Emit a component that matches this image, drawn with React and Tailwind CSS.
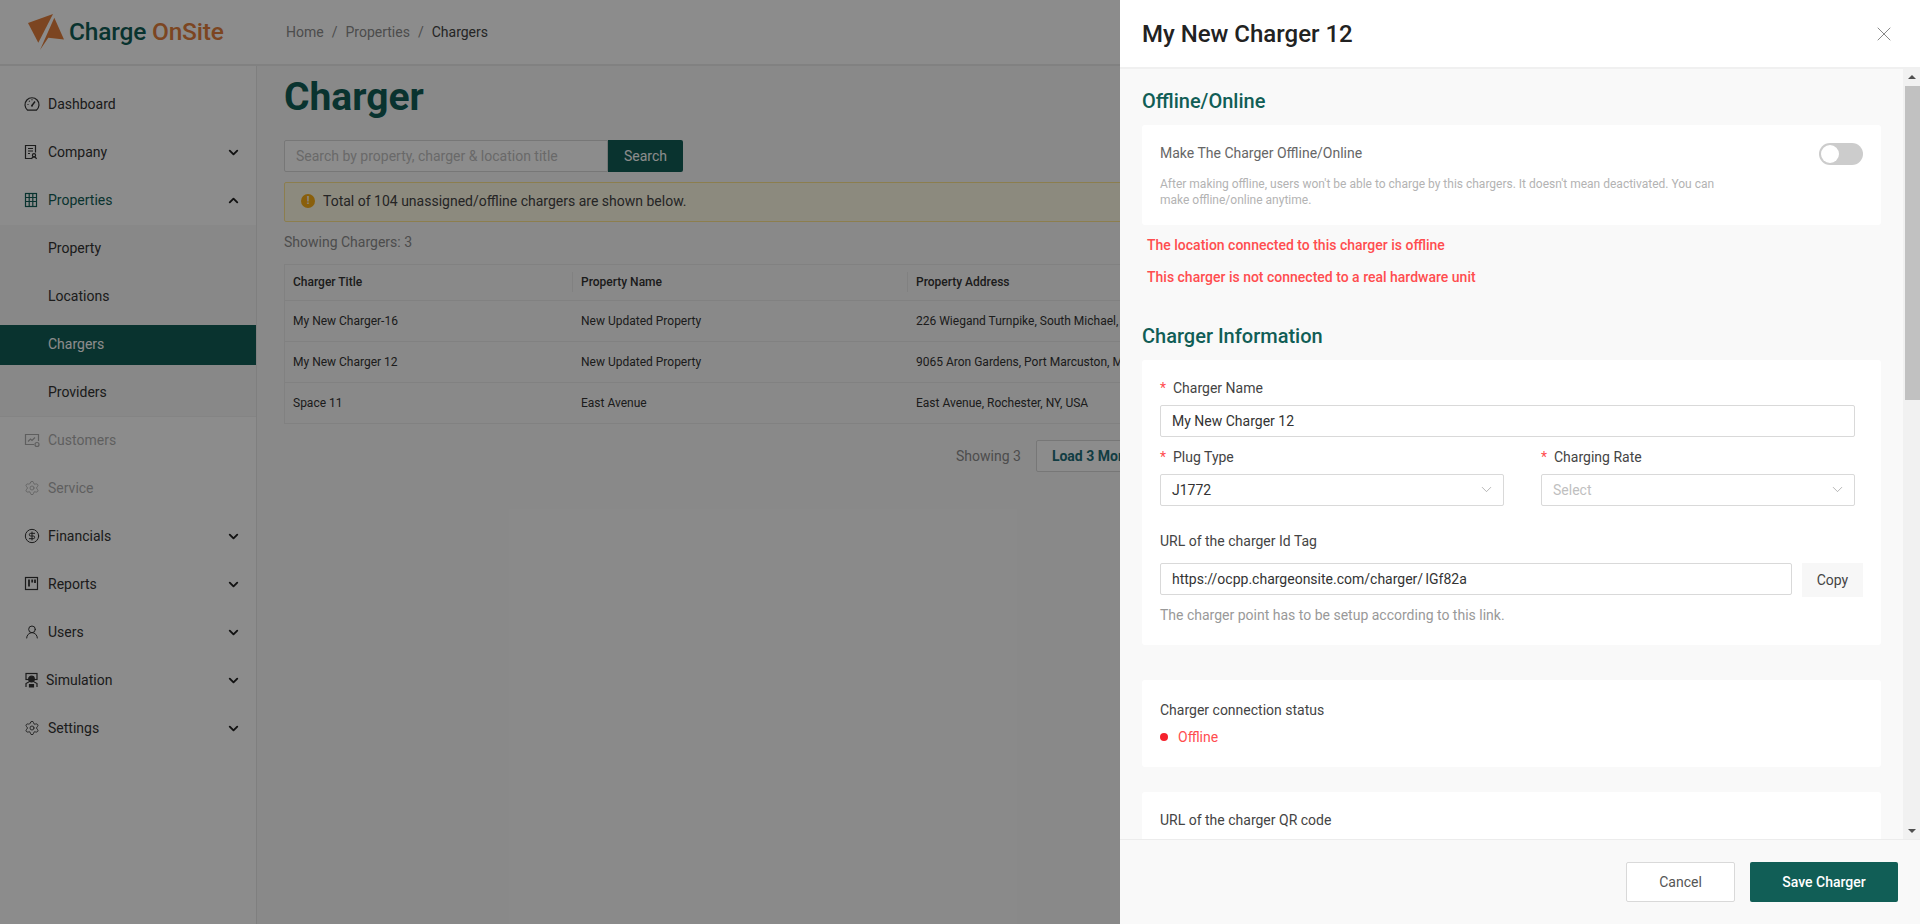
import React from "react";
import { ChevronDown, ChevronUp, X, Settings, UserRound, CircleDollarSign } from "lucide-react";

const GaugeIcon = () => (
  <svg width="16" height="16" viewBox="0 0 16 16" fill="none" stroke="#333" strokeWidth="1.2">
    <path d="M3.6 14.2A7 7 0 1 1 12.4 14.2Z" />
    <path d="M8 9.5l3-4" strokeWidth="1.4" />
    <path d="M3.5 8.5h1M5 4.8l.7.7M8 3.2v1" />
    <circle cx="8" cy="9.8" r="1" fill="#333" stroke="none" />
  </svg>
);
const CompanyIcon = () => (
  <svg width="16" height="16" viewBox="0 0 16 16" fill="none" stroke="#333" strokeWidth="1.2">
    <path d="M8 14.5H1.5V1.5h10v7" />
    <path d="M4 4.5h5M4 7h5M4 9.5h2" />
    <circle cx="10" cy="11.2" r="1.6" />
    <path d="M7.5 15c.3-1.3 1.2-2 2.5-2s2.2.7 2.5 2" />
  </svg>
);
const PropertiesIcon = () => (
  <svg width="16" height="16" viewBox="0 0 16 16" fill="none" stroke="#115e56" strokeWidth="1.2">
    <rect x="1.5" y="1.5" width="11" height="13" />
    <path d="M5.2 1.5v13M8.8 1.5v13M1.5 5.5h11M1.5 9.5h11" />
  </svg>
);
const CustomersIcon = () => (
  <svg width="16" height="16" viewBox="0 0 16 16" fill="none" stroke="#333" strokeWidth="1.2">
    <path d="M10 12.5H1.5v-10h13V9" />
    <path d="M4 9.5l2.5-2.5 1.5 1.5 3-3" />
    <circle cx="13" cy="12.5" r="2" />
  </svg>
);
const ReportsIcon = () => (
  <svg width="16" height="16" viewBox="0 0 16 16" fill="none" stroke="#333" strokeWidth="1.2">
    <rect x="1.5" y="1.5" width="12" height="12" />
    <path d="M5 3.5v7M8.2 3.5v3M11 3.5v3.5" strokeWidth="1.8" />
  </svg>
);
const SimulationIcon = () => (
  <svg width="16" height="16" viewBox="0 0 16 16" fill="none" stroke="#333" strokeWidth="1.2">
    <rect x="2" y="1.5" width="11" height="6" />
    <circle cx="7.5" cy="7" r="2.8" fill="#333" />
    <path d="M2 15v-3.5L5.5 9.5h4l3.5 2V15" />
    <path d="M5.5 12.5h4v2.5h-4z" fill="#333" />
  </svg>
);

const Logo = () => (
  <svg width="38" height="38" viewBox="0 0 38 38">
    <polygon fill="#e27f3c" points="0,10 25,1 10.3,29.8" />
    <polygon fill="#e27f3c" points="26.3,4.8 36,26.5 20.3,24.8 12,37" />
  </svg>
);

const Item = ({ icon, label, chevron, disabled }) => (
  <div className={`h-10 flex items-center pl-6 pr-[15px] mb-2 ${disabled ? "opacity-40" : ""}`}>
    <span className="w-6 shrink-0 flex">{icon}</span>
    <span className={`text-sm flex-1 ${label === "Simulation" ? "-ml-0.5" : ""} ${label === "Properties" ? "text-[#115e56]" : "text-[#333]"}`}>{label}</span>
    {chevron === "down" && <ChevronDown size={15} strokeWidth={3} className="text-[#222]" />}
    {chevron === "up" && <ChevronUp size={15} strokeWidth={3} className="text-[#222]" />}
  </div>
);

const Sub = ({ label, active }) => (
  <div className={`h-10 flex items-center pl-12 pb-[2px] text-sm mb-2 last:mb-0 ${active ? "bg-[#115e56] text-white" : "text-[#333]"}`}>{label}</div>
);

const rows = [
  ["My New Charger-16", "New Updated Property", "226 Wiegand Turnpike, South Michael, OH, USA"],
  ["My New Charger 12", "New Updated Property", "9065 Aron Gardens, Port Marcuston, MI, USA"],
  ["Space 11", "East Avenue", "East Avenue, Rochester, NY, USA"],
];

const Label = ({ children, req }) => (
  <div className="text-sm leading-[22px] text-[#444] flex items-center">
    {req && <span className="text-[#ff4d4f] w-[13px] shrink-0">*</span>}
    {children}
  </div>
);

const Field = ({ children, muted, className = "" }) => (
  <div className={`h-8 border border-[#d9d9d9] rounded-[2px] bg-white flex items-center px-[11px] pb-[1px] text-sm ${muted ? "text-[#bfbfbf]" : "text-[#333]"} ${className}`}>
    {children}
  </div>
);

const SelectField = ({ value, muted, className }) => (
  <Field muted={muted} className={`justify-between ${className}`}>
    <span>{value}</span>
    <ChevronDown size={17} strokeWidth={1} className="text-[#999] -mr-[3px]" />
  </Field>
);

export default function App() {
  return (
    <div className="relative h-[924px] w-[1920px] overflow-hidden bg-[#fafafa] font-['Roboto',sans-serif]">
      <header className="h-[66px] bg-white border-b-2 border-[#ececec] flex items-center">
        <div className="w-[284px] pl-[28px] flex items-center shrink-0">
          <Logo />
          <span className="ml-[3px] text-[24.5px] font-medium tracking-[-0.2px] text-[#115e56] whitespace-nowrap">
            Charge <span className="text-[#e27f3c]">OnSite</span>
          </span>
        </div>
        <nav className="pl-[2px] text-sm text-[#8c8c8c] flex">
          <span>Home</span><span className="mx-2">/</span>
          <span>Properties</span><span className="mx-2">/</span>
          <span className="text-[#444]">Chargers</span>
        </nav>
      </header>
      <div className="flex h-[858px]">
        <aside className="w-[257px] shrink-0 bg-white border-r border-[#e8e8e8] pt-[18px]">
          <Item icon={<GaugeIcon />} label="Dashboard" />
          <Item icon={<CompanyIcon />} label="Company" chevron="down" />
          <div className="-mb-[3px]"><Item icon={<PropertiesIcon />} label="Properties" chevron="up" /></div>
          <div className="bg-[#f7f7f7] pt-[4px] pb-[3px] mb-[3px] border-b border-[#f0f0f0]">
            <Sub label="Property" />
            <Sub label="Locations" />
            <Sub label="Chargers" active />
            <Sub label="Providers" />
          </div>
          <Item icon={<CustomersIcon />} label="Customers" disabled />
          <Item icon={<Settings size={16} strokeWidth={1.2} className="text-[#333]" />} label="Service" disabled />
          <Item icon={<CircleDollarSign size={16} strokeWidth={1.5} className="text-[#333]" />} label="Financials" chevron="down" />
          <Item icon={<ReportsIcon />} label="Reports" chevron="down" />
          <Item icon={<UserRound size={16} strokeWidth={1.5} className="text-[#333]" />} label="Users" chevron="down" />
          <Item icon={<SimulationIcon />} label="Simulation" chevron="down" />
          <Item icon={<Settings size={16} strokeWidth={1.3} className="text-[#333]" />} label="Settings" chevron="down" />
        </aside>
        <main className="flex-1 pl-[27px] pt-[10px] min-w-0">
          <h1 className="text-[39px] leading-[42px] font-bold text-[#115e56]">Charger</h1>
          <div className="flex mt-[22px]">
            <div className="w-[324px] h-8 border border-[#d9d9d9] bg-white rounded-l-[2px] px-[11px] flex items-center text-sm text-[#bfbfbf] whitespace-nowrap">
              Search by property, charger &amp; location title
            </div>
            <div className="w-[75px] h-8 pb-[1px] bg-[#115e56] text-white text-sm flex items-center justify-center rounded-r-[2px]">Search</div>
          </div>
          <div className="mt-[10px] h-10 pb-[2px] border border-[#ffe58f] bg-[#fffbe6] rounded-[2px] flex items-center pl-4 text-sm text-[#444]">
            <span className="w-[14px] h-[14px] rounded-full bg-[#faad14] text-white text-[10px] font-bold flex items-center justify-center mr-2">!</span>
            Total of 104 unassigned/offline chargers are shown below.
          </div>
          <div className="mt-[10px] text-sm leading-5 text-[#8c8c8c]">Showing Chargers: 3</div>
          <div className="mt-[12px] border border-[#ececec] text-xs text-[#333]">
            <div className="h-9 pb-[2px] flex items-center bg-[#fafafa] font-medium border-b border-[#ececec]">
              <div className="w-[288px] pl-2 border-r border-[#ececec] leading-5">Charger Title</div>
              <div className="w-[335px] pl-2 border-r border-[#ececec] leading-5">Property Name</div>
              <div className="flex-1 pl-2 leading-5">Property Address</div>
            </div>
            {rows.map((r) => (
              <div key={r[0]} className="h-[41px] flex items-center border-b border-[#ececec] last:border-b-0 last:h-10 whitespace-nowrap">
                <div className="w-[288px] pl-2">{r[0]}</div>
                <div className="w-[335px] pl-2">{r[1]}</div>
                <div className="flex-1 pl-2">{r[2]}</div>
              </div>
            ))}
          </div>
          <div className="mt-4 flex items-center">
            <span className="ml-[672px] text-sm text-[#8c8c8c]">Showing 3</span>
            <div className="ml-[15px] h-8 px-[15px] border border-[#d9d9d9] bg-white rounded-[2px] text-sm font-bold text-[#1f6f7a] flex items-center whitespace-nowrap">Load 3 More</div>
          </div>
        </main>
      </div>

      <div className="absolute inset-0 bg-black/45" />

      <section className="absolute top-0 bottom-0 right-0 w-[800px] bg-[#f9f9f9] flex flex-col">
        <div className="h-[69px] shrink-0 bg-white border-b-2 border-[#f0f0f0] flex items-center justify-between pl-[22px] pr-[24px]">
          <h2 className="text-2xl font-medium text-[#222]">My New Charger 12</h2>
          <X size={24} strokeWidth={1} className="text-[#888]" />
        </div>
        <div className="flex-1 flex min-h-0">
          <div className="flex-1 overflow-hidden pl-[22px] pr-[22px] pt-[20px]">
            <h3 className="text-[20px] leading-6 font-medium text-[#115e56]">Offline/Online</h3>
            <div className="mt-[12px] h-[100px] bg-white rounded-[3px] px-[18px] pt-4 relative">
              <div className="text-sm leading-6 text-[#666]">Make The Charger Offline/Online</div>
              <div className="absolute right-[18px] top-[18px] w-[44px] h-[22px] rounded-full bg-[#cccccc] p-[2px]">
                <div className="w-[18px] h-[18px] rounded-full bg-white" />
              </div>
              <p className="mt-[11px] text-xs leading-4 text-[#b3b3b3] w-[570px]">
                After making offline, users won't be able to charge by this chargers. It doesn't mean deactivated. You can make offline/online anytime.
              </p>
            </div>
            <div className="mt-[10px] pl-[5px] text-sm leading-5 font-medium text-[#ff4d4f]">The location connected to this charger is offline</div>
            <div className="mt-3 pl-[5px] text-sm leading-5 font-medium text-[#ff4d4f]">This charger is not connected to a real hardware unit</div>
            <h3 className="mt-[37px] text-[20px] leading-6 font-medium text-[#115e56]">Charger Information</h3>
            <div className="mt-3 h-[285px] bg-white rounded-[3px] pl-[18px] pr-[18px] pt-[17px]">
              <Label req>Charger Name</Label>
              <Field className="mt-[6px] w-[695px]">My New Charger 12</Field>
              <div className="flex mt-[9px] w-[695px] justify-between">
                <div className="w-[344px]">
                  <Label req>Plug Type</Label>
                  <SelectField className="mt-[6px]" value="J1772" />
                </div>
                <div className="w-[314px]">
                  <Label req>Charging Rate</Label>
                  <SelectField className="mt-[6px]" value="Select" muted />
                </div>
              </div>
              <div className="mt-6"><Label>URL of the charger Id Tag</Label></div>
              <div className="flex mt-[11px] items-start">
                <Field className="w-[632px] [word-spacing:-1px]">https://ocpp.chargeonsite.com/charger/ lGf82a</Field>
                <div className="ml-[10px] w-[61px] h-[34px] bg-[#f7f7f7] text-sm text-[#444] flex items-center justify-center">Copy</div>
              </div>
              <div className="mt-2 text-sm leading-5 text-[#999]">The charger point has to be setup according to this link.</div>
            </div>
            <div className="mt-[35px] h-[87px] bg-white rounded-[3px] px-[18px] pt-5">
              <div className="text-sm leading-5 text-[#444]">Charger connection status</div>
              <div className="mt-[7px] flex items-center text-sm leading-5 text-[#ff4d4f]">
                <span className="w-2 h-2 rounded-full bg-[#f5222d] mr-[10px]" />Offline
              </div>
            </div>
            <div className="mt-[25px] h-[120px] bg-white rounded-[3px] px-[18px] pt-[18px]">
              <div className="text-sm leading-5 text-[#444]">URL of the charger QR code</div>
            </div>
          </div>
          <div className="w-[17px] shrink-0 bg-[#f1f1f1] flex flex-col items-center justify-between relative">
            <div className="mt-[6px] w-0 h-0 border-x-[4px] border-x-transparent border-b-[4px] border-b-[#505050]" />
            <div className="absolute left-[2px] right-0 top-[17px] h-[314px] bg-[#c1c1c1]" />
            <div className="mb-[6px] w-0 h-0 border-x-[4px] border-x-transparent border-t-[4px] border-t-[#505050]" />
          </div>
        </div>
        <div className="h-[85px] shrink-0 border-t border-[#ececec] flex items-start justify-end pt-[22px] pr-[22px]">
          <div className="w-[109px] h-10 border border-[#d9d9d9] bg-white rounded-[2px] text-sm text-[#555] flex items-center justify-center">Cancel</div>
          <div className="ml-[15px] w-[148px] h-10 bg-[#115e56] rounded-[2px] text-sm font-medium text-white flex items-center justify-center">Save Charger</div>
        </div>
      </section>
    </div>
  );
}
